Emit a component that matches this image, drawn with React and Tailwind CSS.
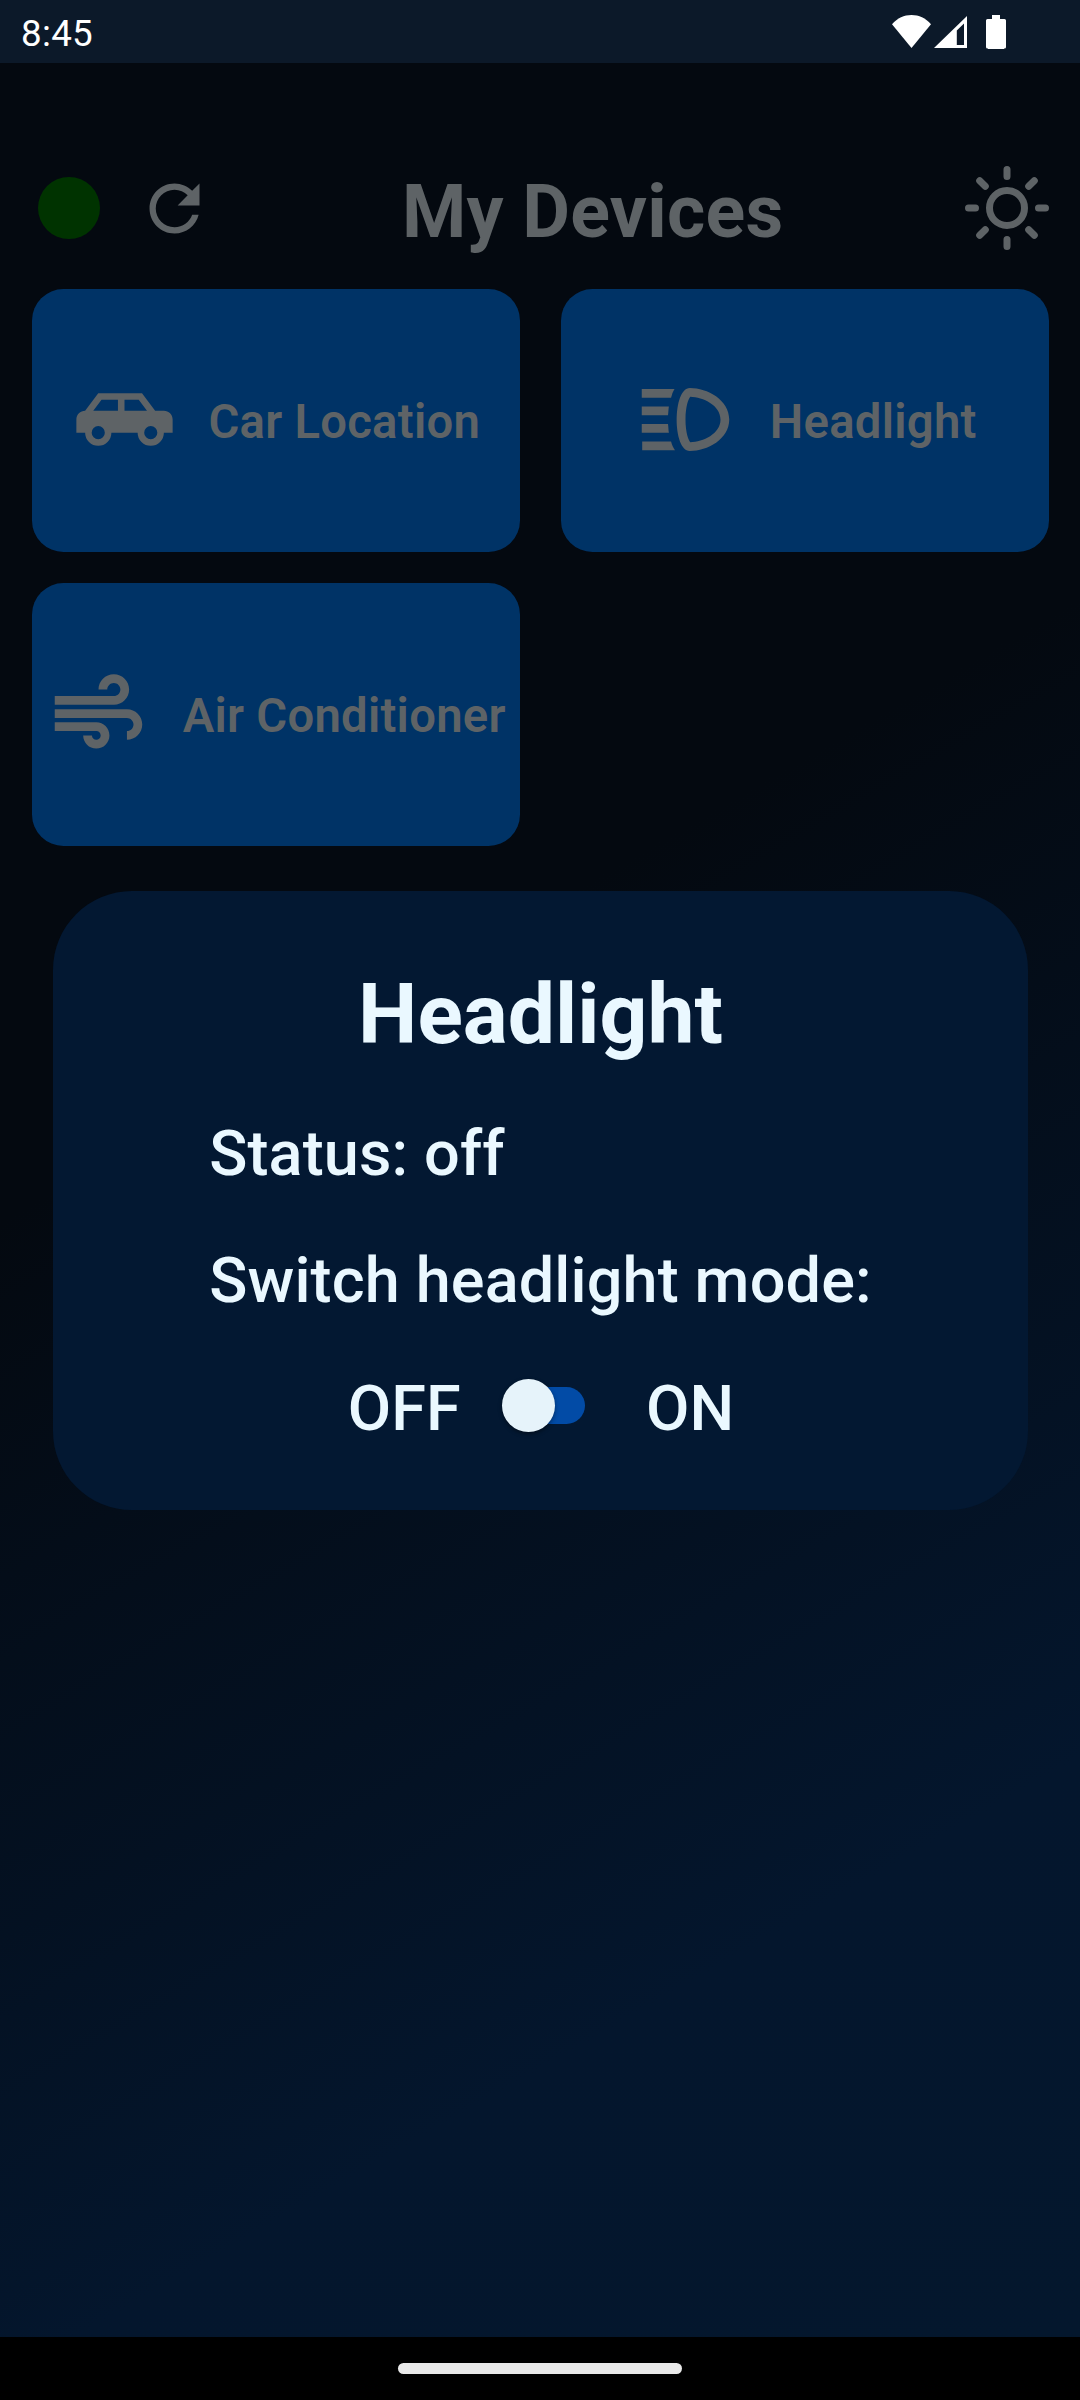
const AIR =
  "M14.5 17c0 1.65-1.35 3-3 3s-3-1.35-3-3h2c0 .55.45 1 1 1s1-.45 1-1-.45-1-1-1H2v-2h9.5c1.65 0 3 1.35 3 3zM19 6.5C19 4.57 17.43 3 15.5 3S12 4.57 12 6.5h2c0-.83.67-1.5 1.5-1.5s1.5.67 1.5 1.5S16.33 8 15.5 8H2v2h13.5c1.93 0 3.5-1.57 3.5-3.5zM18.5 11H2v2h16.5c.83 0 1.5.67 1.5 1.5s-.67 1.5-1.5 1.5v2c1.93 0 3.5-1.57 3.5-3.5S20.43 11 18.5 11z";
const CAR =
  "M16,6L19,10H21C22.11,10 23,10.89 23,12V15H21A3,3 0 0,1 18,18A3,3 0 0,1 15,15H9A3,3 0 0,1 6,18A3,3 0 0,1 3,15H1V12C1,10.89 1.89,10 3,10L6,6H16M10.5,7.5H6.75L4.86,10H10.5V7.5M12,7.5V10H17.14L15.25,7.5H12M6,13.5A1.5,1.5 0 0,0 4.5,15A1.5,1.5 0 0,0 6,16.5A1.5,1.5 0 0,0 7.5,15A1.5,1.5 0 0,0 6,13.5M18,13.5A1.5,1.5 0 0,0 16.5,15A1.5,1.5 0 0,0 18,16.5A1.5,1.5 0 0,0 19.5,15A1.5,1.5 0 0,0 18,13.5Z";
const HEADLIGHT =
  "M13,4.8C9,4.8 9,19.2 13,19.2C17,19.2 22,16.5 22,12C22,7.5 17,4.8 13,4.8M13.1,17.2C12.7,16.8 12,15 12,12C12,9 12.7,7.2 13.1,6.8C16,6.9 20,8.7 20,12C20,15.3 16,17.1 13.1,17.2M2,5H9.5C9.3,5.4 9,5.8 8.9,6.4C8.8,6.6 8.8,6.8 8.7,7H2V5M8,11H2V9H8.2C8.1,9.6 8.1,10.3 8,11M8.7,17C8.9,17.8 9.2,18.4 9.6,19H2.1V17H8.7M8.2,15H2V13H8C8.1,13.7 8.1,14.4 8.2,15Z";
const REFRESH =
  "M17.65 6.35C16.2 4.9 14.21 4 12 4c-4.42 0-7.99 3.58-7.99 8s3.57 8 7.99 8c3.73 0 6.84-2.55 7.73-6h-2.08c-.82 2.33-3.04 4-5.65 4-3.31 0-6-2.69-6-6s2.69-6 6-6c1.66 0 3.14.69 4.22 1.78L13 11h7V4l-2.35 2.35z";

const DEVICES = [
  { label: "Car Location", icon: CAR },
  { label: "Headlight", icon: HEADLIGHT },
  { label: "Air Conditioner", icon: AIR },
];

function StatusBar() {
  return (
    <div className="flex h-[63px] shrink-0 items-center justify-between bg-[#0c1929] pl-[21px] pr-[74px] text-white">
      <span className="pt-[5px] text-[36.75px] leading-none tracking-[0.3px]">8:45</span>
      <div className="flex h-[34px] items-start">
        <svg className="mr-[3px] h-[33px] w-[39px]" viewBox="0 0 39 33" fill="currentColor">
          <path d="M0 9.2C5.5 3 12 0 19.5 0S33.5 3 39 9.2L19.5 33z" />
        </svg>
        <svg className="mr-[19px] mt-px h-8 w-[33px]" viewBox="0 0 33 32" fill="currentColor" fillRule="evenodd">
          <path d="M33 0V32H0zM30 7.5L22.8 14.5V29H30z" />
        </svg>
        <svg className="h-[34px] w-5" viewBox="0 0 20 34" fill="currentColor">
          <path d="M6 0h8v4h4.5a1.5 1.5 0 0 1 1.5 1.5V32a1.5 1.5 0 0 1-1.5 1.5H18V34H2v-.5H1.500A1.5 1.5 0 0 1 0 32V5.500A1.5 1.5 0 0 1 1.500 4H6z" />
        </svg>
      </div>
    </div>
  );
}

function Sun() {
  return (
    <svg className="h-[84px] w-[84px]" viewBox="0 0 24 24" fill="none" stroke="currentColor" strokeWidth="2" strokeLinecap="round">
      <circle cx="12" cy="12" r="5" />
      <path d="M12 1v2M12 21v2M1 12h2M21 12h2M4.200 4.200L5.800 5.800M18.200 18.200L19.800 19.800M4.200 19.800L5.800 18.200M18.200 5.800L19.800 4.200" />
    </svg>
  );
}

function Header() {
  return (
    <div className="mt-[95px] flex h-[100px] shrink-0 items-center justify-between pl-[38px] pr-[31px]">
      <div className="flex items-center">
        <div className="h-[62px] w-[62px] rounded-full bg-[#003300]" />
        <svg className="ml-[36.5px] h-[75px] w-[75px]" viewBox="0 0 24 24" fill="currentColor">
          <path d={REFRESH} />
        </svg>
      </div>
      <h1 className="ml-[9px] pt-[9px] text-[73.5px] font-bold leading-none tracking-[0.25px]">My Devices</h1>
      <Sun />
    </div>
  );
}

function DeviceCard({ label, icon }) {
  return (
    <div className="flex h-[263px] items-center justify-center gap-[31.5px] rounded-[31.5px] bg-[#003366] pb-[2px]">
      <svg className="h-[105px] w-[105px] shrink-0" viewBox="0 0 24 24" fill="currentColor">
        <path d={icon} />
      </svg>
      <span className="whitespace-nowrap pt-[6px] text-[47.25px] font-semibold leading-none tracking-[0.25px]">{label}</span>
    </div>
  );
}

function HeadlightDialog() {
  return (
    <div className="absolute left-[53px] top-[891px] flex h-[619px] w-[975px] flex-col items-center rounded-[79px] bg-[#031832] text-[#eaf8ff]">
      <h2 className="mt-[75px] text-[84px] font-bold leading-[98px]">Headlight</h2>
      <div className="mt-[53px] flex flex-col gap-[53px] text-[63px] font-medium leading-[74px] tracking-[0.13px]">
        <p>Status: off</p>
        <p>Switch headlight mode:</p>
      </div>
      <div className="mt-[54px] flex items-center pl-px text-[63px] font-medium leading-[74px]">
        <span>OFF</span>
        <div className="relative ml-[41.5px] h-[53px] w-[83px] -translate-y-[4px]">
          <div className="absolute right-0 top-[8px] h-[37px] w-[73px] rounded-full bg-[#024ba6]" />
          <div className="absolute left-0 top-0 h-[53px] w-[53px] rounded-full bg-[#e6f3fa] shadow-[0_2px_4px_rgba(0,0,0,0.4)]" />
        </div>
        <span className="ml-[61px]">ON</span>
      </div>
    </div>
  );
}

export default function App() {
  return (
    <div className="relative flex h-[2400px] w-[1080px] flex-col overflow-hidden bg-black font-[Roboto,sans-serif]">
      <StatusBar />
      <main className="flex flex-1 flex-col bg-[linear-gradient(150deg,#040910_0%,#040910_40%,#04162d_80%,#04172d_100%)] text-[#5e6366]">
        <Header />
        <div className="mt-[31px] grid grid-cols-[488px_488px] gap-x-[41px] gap-y-[31px] pl-8">
          {DEVICES.map((d) => (
            <DeviceCard key={d.label} {...d} />
          ))}
        </div>
      </main>
      <div className="flex h-[63px] shrink-0 justify-center bg-black pt-[26px]">
        <div className="h-[11px] w-[284px] rounded-full bg-[#e9e9e9]" />
      </div>
      <HeadlightDialog />
    </div>
  );
}
